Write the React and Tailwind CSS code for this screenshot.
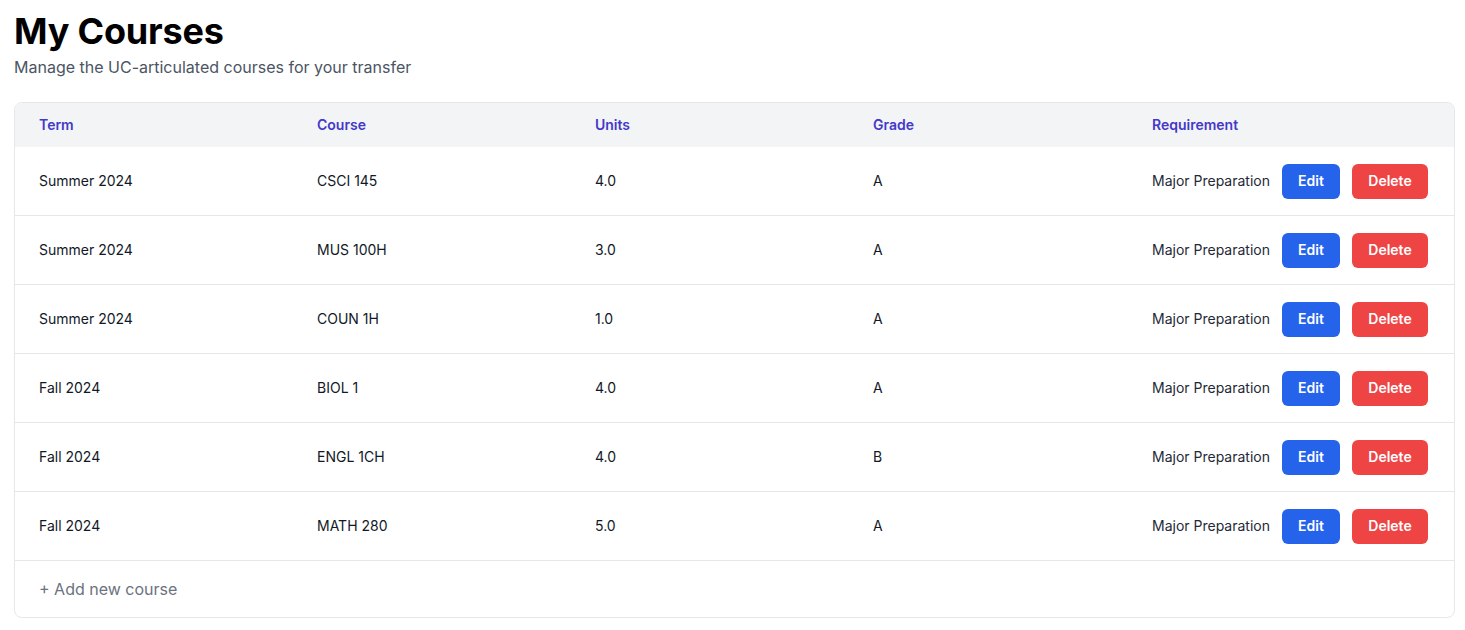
import React from "react";

const rows = [
  ["Summer 2024", "CSCI 145", "4.0", "A"],
  ["Summer 2024", "MUS 100H", "3.0", "A"],
  ["Summer 2024", "COUN 1H", "1.0", "A"],
  ["Fall 2024", "BIOL 1", "4.0", "A"],
  ["Fall 2024", "ENGL 1CH", "4.0", "B"],
  ["Fall 2024", "MATH 280", "5.0", "A"],
];

const grid = "grid grid-cols-[278px_278px_278px_279px_1fr] items-center";

export default function App() {
  return (
    <div className="bg-white px-[14px] pt-[8px] font-['Inter',sans-serif] text-black">
      <h1 className="text-4xl font-bold leading-[46px] tracking-[-0.2px]">My Courses</h1>
      <p className="text-base text-[#4b5563] leading-6 mt-[1px]">Manage the UC-articulated courses for your transfer</p>
      <div className="mt-[23px] w-[1441px] border border-[#e5e7eb] rounded-lg overflow-hidden">
        <div className={grid + " bg-[#f3f4f6] h-[44px] text-sm font-semibold text-[#4338ca]"}>
          <div className="px-6">Term</div>
          <div className="px-6">Course</div>
          <div className="px-6">Units</div>
          <div className="px-6">Grade</div>
          <div className="px-6">Requirement</div>
        </div>
        {rows.map((r, i) => (
          <div key={i} className={grid + " h-[69px] border-b border-[#e5e7eb] text-sm text-[#111827]"}>
            <div className="px-6">{r[0]}</div>
            <div className="px-6">{r[1]}</div>
            <div className="px-6">{r[2]}</div>
            <div className="px-6">{r[3]}</div>
            <div className="px-6 flex items-center whitespace-nowrap">
              <span className="text-[#1f2937]">Major Preparation</span>
              <button className="ml-3 h-[35px] w-[58px] rounded-md bg-[#2563eb] text-white text-sm font-semibold">Edit</button>
              <button className="ml-3 h-[35px] w-[76px] rounded-md bg-[#ef4444] text-white text-sm font-semibold">Delete</button>
            </div>
          </div>
        ))}
        <div className="h-[56px] flex items-center px-6 text-base text-[#6b7280]">+ Add new course</div>
      </div>
    </div>
  );
}
